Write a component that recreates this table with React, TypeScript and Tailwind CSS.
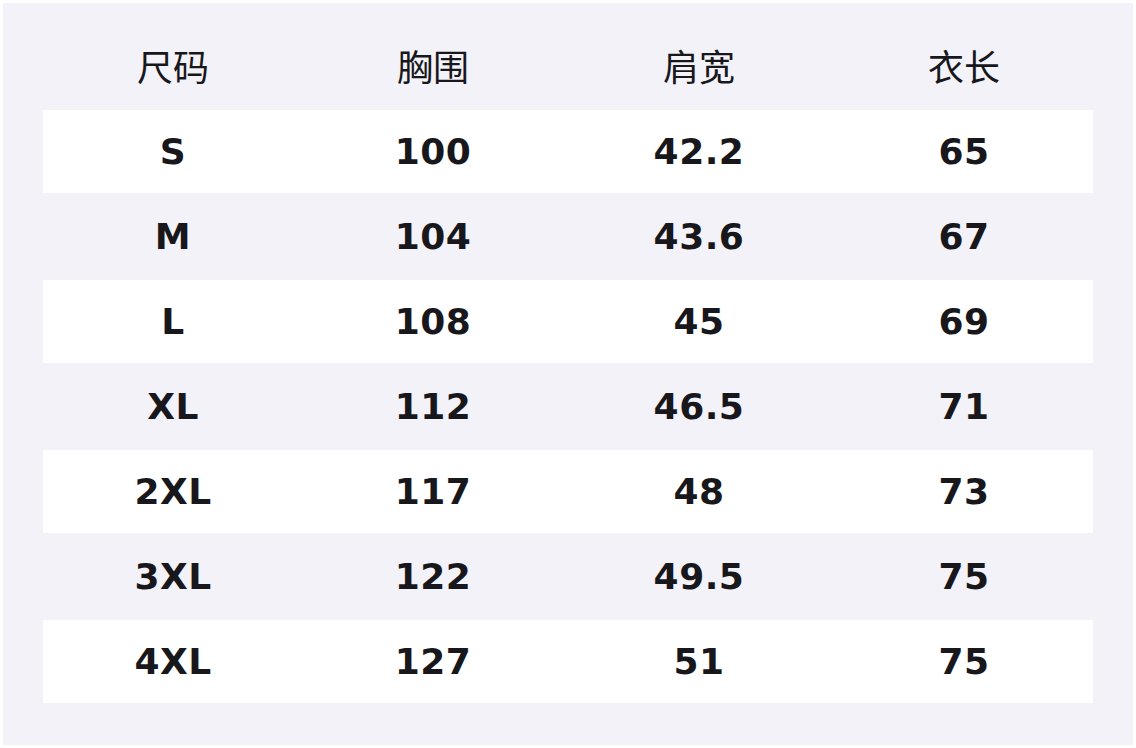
const headers = ['尺码', '胸围', '肩宽', '衣长'];

const rows = [
  ['S', '100', '42.2', '65'],
  ['M', '104', '43.6', '67'],
  ['L', '108', '45', '69'],
  ['XL', '112', '46.5', '71'],
  ['2XL', '117', '48', '73'],
  ['3XL', '122', '49.5', '75'],
  ['4XL', '127', '51', '75'],
];

export default function App() {
  return (
    <div className="h-[748px] w-[1136px] bg-white p-[3px] font-['DejaVu_Sans','Noto_Sans_CJK_SC',sans-serif] text-[#17171c]">
      <div className="h-full w-full bg-[#f3f2f8] px-[40px]">
        <table className="w-full table-fixed border-separate border-spacing-x-0 border-spacing-y-[2px] pt-[40px]">
          <colgroup>
            <col className="w-[260px]" />
            <col className="w-[260px]" />
            <col className="w-[272px]" />
            <col className="w-[258px]" />
          </colgroup>
          <thead>
            <tr className="h-[63px]">
              {headers.map((h) => (
                <th key={h} className="pb-[16px] text-center text-[36px] leading-[40px] font-normal">
                  {h}
                </th>
              ))}
            </tr>
          </thead>
          <tbody>
            {rows.map((row, i) => (
              <tr key={i} className={i % 2 === 0 ? 'h-[83px] bg-white' : 'h-[83px]'}>
                {row.map((cell, j) => (
                  <td key={j} className="text-center text-[36px] font-bold tracking-[0.5px]">
                    {cell}
                  </td>
                ))}
              </tr>
            ))}
          </tbody>
        </table>
      </div>
    </div>
  );
}
